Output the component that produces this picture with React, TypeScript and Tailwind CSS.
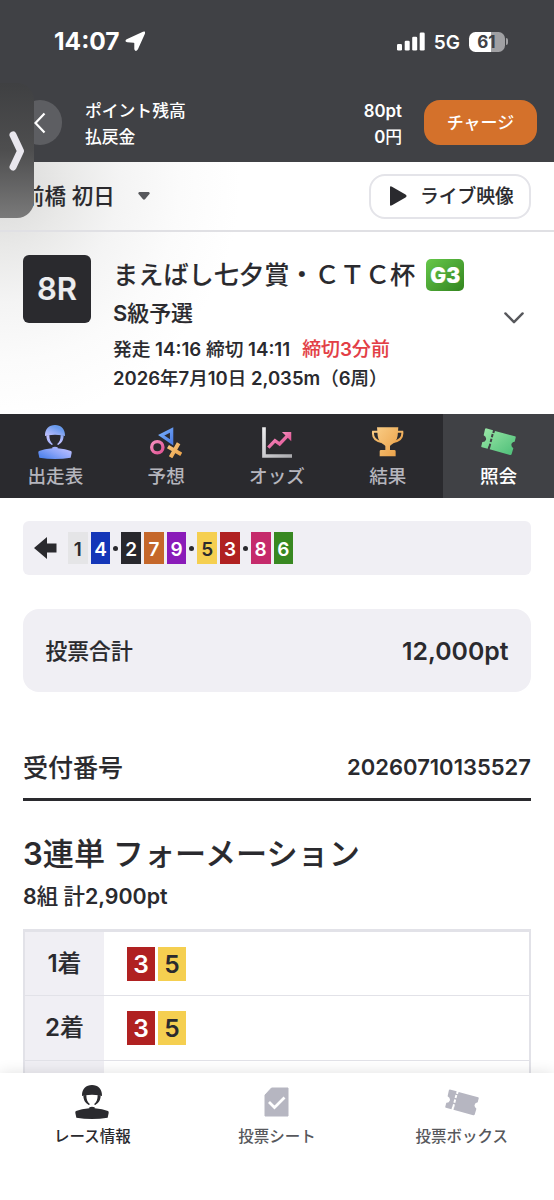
import React from "react";

/* Latin runs are set heavier than the Japanese runs around them. */
function Mix({ children }: { children: string }) {
  const runs = children.match(/[\x20-\x7e]+|[^\x20-\x7e]+/g) ?? [];
  return (
    <>
      {runs.map((r, i) =>
        /^[\x20-\x7e]/.test(r) ? (
          <span key={i} className="font-semibold [-webkit-text-stroke:0]">{r}</span>
        ) : (
          <span key={i}>{r}</span>
        )
      )}
    </>
  );
}

const plate: Record<number, string> = {
  1: "bg-[#e5e5e7] text-[#2a2a2e]",
  2: "bg-[#28282d] text-white",
  3: "bg-[#b02121] text-white",
  4: "bg-[#1436b8] text-white",
  5: "bg-[#f5cf50] text-[#2a2a2e]",
  6: "bg-[#388821] text-white",
  7: "bg-[#c5672a] text-white",
  8: "bg-[#c52a6b] text-white",
  9: "bg-[#8a1bb9] text-white",
};

function Rider({ fill }: { fill: string }) {
  return (
    <svg viewBox="115 42 102 106" className="h-[35.3px] w-[34px]">
      <g fill={fill}>
        <path d="M136 76 C136 57 148 45 166 45 C184 45 196 57 196 76 L196 78 L187 76 Q166 72 145 76 L136 78Z" />
        <path d="M140 76 L149 75 C149 88 152 96 160 103 L156 105 C146 99 140 91 140 76Z M192 76 L183 75 C183 88 180 96 172 103 L176 105 C186 99 192 91 192 76Z" />
        <path d="M158 112 Q166 109 174 112 L174 115 Q198 117 214 123 Q217 125 216 129 L213 143 Q190 147 166 147 Q142 147 119 143 L116 129 Q115 125 118 123 Q134 117 158 115Z" />
      </g>
    </svg>
  );
}

function Ticket({ fill, className }: { fill: string; className: string }) {
  return (
    <svg viewBox="614 56 105 83" className={className}>
      <path fill={fill} d="M629 57 L650 63 L648 70 L654 72 L656 65 L716 81 Q719 82 718 85 L715 97 Q706 98 705 106 Q705 112 711 117 L706 134 Q705 138 701 137 L640 120 L642 113 L636 111 L634 118 L617 114 Q614 113 615 110 L618 98 Q626 99 629 91 Q631 83 622 78 L626 60 Q627 57 629 57Z" />
      <path fill="none" stroke="currentColor" strokeWidth="6" strokeDasharray="10 5" d="M649 74 L639 114" />
    </svg>
  );
}

function Prediction() {
  return (
    <svg viewBox="449 47 98 98" className="h-[32.6px] w-[32.6px]" fill="none">
      <path d="M514 59 L483 75 L514 96Z" stroke="url(#blue)" strokeWidth="10" />
      <circle cx="471" cy="111" r="17" stroke="url(#pink)" strokeWidth="10" />
      <path d="M503 109 L543 132 M535 99 L511 141" stroke="url(#gold)" strokeWidth="12" />
    </svg>
  );
}

function Odds() {
  return (
    <svg viewBox="785 50 92 93" className="h-[31px] w-[30.6px]" fill="none">
      <path d="M791 51 V137 H876" stroke="url(#silver)" strokeWidth="11" />
      <path d="M804 112 L824 91 L838 101 L862 76" stroke="url(#pink)" strokeWidth="10" />
      <path d="M845 65 H873 V93Z" fill="url(#pink)" />
    </svg>
  );
}

function Trophy() {
  return (
    <svg viewBox="283 53 99 89" className="h-[29.6px] w-[33px]">
      <path d="M304 67 H289 Q286 92 314 98 M361 67 H377 Q380 92 351 98" fill="none" stroke="url(#gold)" strokeWidth="6" />
      <path fill="url(#gold)" d="M301 54 H365 L363 79 Q360 98 343 107 L340 110 V122 H353 Q357 122 357 126 V141 H309 V126 Q309 122 313 122 H326 V110 L323 107 Q305 98 303 79Z" />
    </svg>
  );
}

const dark = "bg-[#2a2a2e]";

const tabs = [
  { label: "出走表", icon: <Rider fill="url(#rider)" /> },
  { label: "予想", icon: <Prediction /> },
  { label: "オッズ", icon: <Odds /> },
  { label: "結果", icon: <Trophy /> },
  { label: "照会", icon: <Ticket fill="url(#green)" className="h-[27.7px] w-[35px] text-[#404145]" />, active: true },
];

const lineup = [[1, 4], [2, 7, 9], [5, 3], [8, 6]];

function Gradients() {
  return (
    <svg className="absolute h-0 w-0">
      <defs>
        <linearGradient id="rider" gradientUnits="userSpaceOnUse" x1="190" y1="45" x2="140" y2="147">
          <stop stopColor="#6fa2ee" /><stop offset=".12" stopColor="#6799ec" /><stop offset=".45" stopColor="#c3c2ff" /><stop offset=".75" stopColor="#8ba4f8" /><stop offset="1" stopColor="#5385ed" />
        </linearGradient>
        <linearGradient id="blue" x1="0" y1="0" x2="1" y2="1">
          <stop stopColor="#77adfa" /><stop offset="1" stopColor="#4e7fe5" />
        </linearGradient>
        <linearGradient id="pink" x1="0" y1="0" x2="1" y2="1">
          <stop stopColor="#f690bf" /><stop offset="1" stopColor="#e05292" />
        </linearGradient>
        <linearGradient id="gold" x1="0" y1="0" x2="1" y2="1">
          <stop stopColor="#f9cb83" /><stop offset="1" stopColor="#eaa047" />
        </linearGradient>
        <linearGradient id="silver" x1="0" y1="0" x2="1" y2="1">
          <stop stopColor="#ececee" /><stop offset="1" stopColor="#aaaaae" />
        </linearGradient>
        <linearGradient id="green" x1="0" y1="0" x2="1" y2="1">
          <stop stopColor="#9ce8a8" /><stop offset="1" stopColor="#4bbd77" />
        </linearGradient>
      </defs>
    </svg>
  );
}

function Header() {
  return (
    <header className="h-[162px] shrink-0 bg-[#404145] text-white [-webkit-text-stroke:0]">
      <div className="flex h-[83px] items-center pl-[54px] pr-[46px]">
        <span className="text-[24.5px] leading-none font-bold">14:07</span>
        <svg viewBox="376 94 62 62" className="ml-[5px] h-[20.6px] w-[20.6px]">
          <path fill="white" d="M430 96 Q439 93 436 102 L415 149 Q408 159 404 149 V131 Q404 129 402 129 L383 128 Q373 125 381 119Z" />
        </svg>
        <svg viewBox="0 0 28 19" className="ml-auto h-[19px] w-[28px]" fill="white">
          <rect x="0" y="12" width="5" height="6.5" rx="1.3" />
          <rect x="7.7" y="8.7" width="5" height="9.8" rx="1.3" />
          <rect x="15.2" y="4.8" width="5" height="13.7" rx="1.3" />
          <rect x="22.7" y=".5" width="5" height="18" rx="1.3" />
        </svg>
        <span className="ml-[9px] mt-[1px] text-[19px] leading-none font-semibold">5G</span>
        <div className="ml-[9px] flex h-[20px] w-[36px] items-center justify-center rounded-[6.5px] bg-[linear-gradient(90deg,#fff_61%,#a0a0a3_61%)] pr-px pt-[1px] text-[17px] leading-none font-bold text-[#404145]">61</div>
        <span className="ml-[1px] h-[7px] w-[2px] rounded-r-full bg-[#a0a0a3]" />
      </div>
      <div className="flex pl-[18px] pr-[17px] pt-[17px]">
        <div className="flex h-[45px] w-[44px] items-center justify-center rounded-full bg-[#5d5e62]">
          <svg viewBox="0 0 12 22" className="h-[22px] w-[12px]" fill="none" stroke="white" strokeWidth="2.2"><path d="M10.5 1.5 L1.5 11 L10.5 20.5" /></svg>
        </div>
        <div className="-mt-[2px] ml-[23px] text-[16.8px] leading-[26px]">
          <p>ポイント残高</p>
          <p>払戻金</p>
        </div>
        <div className="-mt-[2px] ml-auto text-right text-[16.8px] leading-[26px]">
          <p><Mix>80pt</Mix></p>
          <p><Mix>0円</Mix></p>
        </div>
        <button className="ml-[22px] h-[45px] w-[113px] rounded-[16px] bg-[#d4712b] pt-[2px] text-[17px] leading-none">チャージ</button>
      </div>
    </header>
  );
}

function Venue() {
  return (
    <div className="flex h-[70px] shrink-0 items-center border-b-[2.5px] border-[#e0e0e4] pl-[23px] pr-[23px]">
      <span className="pt-[2px] text-[21.5px] leading-none">前橋 初日</span>
      <svg viewBox="0 0 12 8" className="ml-[23px] h-[8px] w-[12px]"><path d="M1.4 0 H10.6 Q12.6 .8 11 2.6 L7.2 7 Q6 8.4 4.8 7 L1 2.6 Q-.6 .8 1.4 0Z" fill="#57585c" /></svg>
      <button className="ml-auto flex h-[45px] w-[162px] items-center rounded-[16px] border-[2.5px] border-[#e4e4e9] bg-white pl-[18px]">
        <svg viewBox="0 0 18 20" className="h-[20px] w-[18px]"><path d="M1 1.6 Q1 -.4 3 .8 L16.5 8.6 Q18.6 10 16.5 11.4 L3 19.2 Q1 20.4 1 18.4Z" fill="#2a2a2e" /></svg>
        <span className="ml-[13px] pt-[2px] whitespace-nowrap text-[18.8px] leading-none">ライブ映像</span>
      </button>
    </div>
  );
}

function Race() {
  return (
    <section className="flex h-[182px] shrink-0 pl-[23px] pr-[30px] pt-[23px]">
      <div className={`flex h-[68px] w-[68px] items-center justify-center rounded-[6px] pb-[2px] text-[31px] leading-none font-semibold text-[#ededef] ${dark}`}>8R</div>
      <div className="ml-[22px] whitespace-nowrap">
        <div className="flex h-[38px] items-center">
          <h1 className="pt-[1px] text-[25.2px] leading-[38px]">まえばし七夕賞・ＣＴＣ杯</h1>
          <span className="ml-[11px] mt-[2px] flex h-[32px] w-[38px] items-center justify-center rounded-[5px] bg-linear-to-br from-[#66c84a] to-[#33851f] text-[21px] leading-none font-black text-white">G3</span>
        </div>
        <p className="mt-[3px] text-[21.9px] leading-[34px]"><Mix>S級予選</Mix></p>
        <p className="mt-[6px] text-[18.7px] leading-[28px]">
          <Mix>発走 14:16 締切 14:11</Mix>
          <span className="ml-[12px] text-[18.9px] text-[#e33d45]"><Mix>締切3分前</Mix></span>
        </p>
        <p className="text-[18.5px] leading-[28px]"><Mix>2026年7月10日 2,035m（6周）</Mix></p>
      </div>
      <svg viewBox="0 0 20 12" className="ml-auto mt-[57px] h-[12px] w-[20px] shrink-0" fill="none" stroke="#57585c" strokeWidth="2.4" strokeLinecap="round" strokeLinejoin="round"><path d="M1.4 1.4 L10 10.2 L18.6 1.4" /></svg>
    </section>
  );
}

function Tabs() {
  return (
    <nav className={`grid h-[84px] shrink-0 grid-cols-5 [-webkit-text-stroke:0] ${dark}`}>
      {tabs.map((t) => (
        <div key={t.label} className={`flex flex-col items-center pt-[9px] text-[18.6px] ${t.active ? "bg-[#404145] text-white" : "text-[#b5b5bd]"}`}>
          <span className="flex h-[38px] items-center">{t.icon}</span>
          <span className="mt-[1px] leading-[28px]">{t.label}</span>
        </div>
      ))}
    </nav>
  );
}

function Lineup() {
  return (
    <div className="mt-[23px] flex h-[54px] items-center rounded-[6px] bg-[#f0eff4] pl-[11px]">
      <svg viewBox="0 0 23 22" className="h-[22px] w-[23px]"><path d="M0 11 L13 0 V6.4 H22.5 V15.6 H13 V22Z" fill="#2a2a2e" /></svg>
      <div className="ml-[11px] flex items-center">
        {lineup.map((group, i) => (
          <React.Fragment key={i}>
            {i > 0 && <span className={`mx-[3px] h-[5px] w-[5px] rounded-full ${dark}`} />}
            <div className="flex gap-[3px]">
              {group.map((n) => (
                <span key={n} className={`flex h-[32px] w-[19.7px] items-center justify-center pt-[2px] text-[19px] leading-none font-semibold [-webkit-text-stroke:0] ${plate[n]}`}>{n}</span>
              ))}
            </div>
          </React.Fragment>
        ))}
      </div>
    </div>
  );
}

function FormationRow({ place = "", picks = [] }: { place?: string; picks?: number[] }) {
  return (
    <div className="flex h-[64.3px] border-b-[1.3px] border-[#e2e2e8]">
      <div className="flex w-[79px] items-center justify-center bg-[#f0eff4] text-[24px] leading-none"><span><Mix>{place}</Mix></span></div>
      <div className="flex items-center gap-[3px] pl-[23px]">
        {picks.map((n) => (
          <span key={n} className={`flex h-[34px] w-[28px] items-center justify-center pt-[1px] text-[24.5px] leading-none font-semibold [-webkit-text-stroke:0] ${plate[n]}`}>{n}</span>
        ))}
      </div>
    </div>
  );
}

function BottomNav() {
  return (
    <nav className="relative grid h-[127px] shrink-0 grid-cols-3 bg-white text-[15.5px] text-[#57585c] shadow-[0_0_14px_rgba(0,0,0,0.12)] [-webkit-text-stroke:0]">
      <div className="flex flex-col items-center pt-[10px] text-[#2a2a2e]">
        <span className="flex h-[38px] items-center"><Rider fill="#2a2a2e" /></span>
        <span className="mt-[4px] leading-[24px]">レース情報</span>
      </div>
      <div className="flex flex-col items-center pt-[10px]">
        <span className="flex h-[38px] items-center">
          <svg viewBox="0 0 25 30" className="h-[30px] w-[25px]"><path d="M7.5 1 H24 V29 H1 V8Z" fill="#b6b6c1" stroke="#b6b6c1" strokeWidth="1" /><path d="M5 15 L10.5 20.5 L20.5 10.5" fill="none" stroke="white" strokeWidth="2.8" /></svg>
        </span>
        <span className="mt-[4px] leading-[24px]">投票シート</span>
      </div>
      <div className="flex flex-col items-center pt-[10px]">
        <span className="flex h-[38px] items-center"><Ticket fill="#b6b6c1" className="h-[27px] w-[34px] text-white" /></span>
        <span className="mt-[4px] leading-[24px]">投票ボックス</span>
      </div>
    </nav>
  );
}

export default function App() {
  return (
    <div className="relative flex h-[1200px] w-[554px] flex-col overflow-hidden bg-white font-['Inter','Noto_Sans_CJK_JP',sans-serif] font-medium text-[#2a2a2e] [-webkit-text-stroke:0.12px]">
      <Gradients />
      <Header />
      <div className="shrink-0 bg-[radial-gradient(ellipse_240px_240px_at_0px_20px,#d8d8d7_0%,#e9e9e8_28%,#f4f4f4_50%,#fbfbfb_75%,#ffffff_100%)]">
        <Venue />
        <Race />
      </div>
      <Tabs />
      <main className="min-h-0 flex-1 overflow-hidden px-[23px]">
        <Lineup />
        <div className="mt-[34px] flex h-[83px] items-center justify-between rounded-[16px] bg-[#f0eff4] px-[22.5px] pt-[2px]">
          <span className="text-[21.8px] leading-none">投票合計</span>
          <span className="text-[24.8px] leading-none font-semibold [-webkit-text-stroke:0]">12,000pt</span>
        </div>
        <div className="mt-[45px] flex h-[64px] items-center justify-between border-b-[3px] border-[#2a2a2e] pt-px">
          <span className="text-[25px] leading-none">受付番号</span>
          <span className="pb-[2px] text-[22px] leading-none font-semibold [-webkit-text-stroke:0]">20260710135527</span>
        </div>
        <h2 className="mt-[32px] whitespace-nowrap text-[31.1px] leading-[42px]"><Mix>3連単 フォーメーション</Mix></h2>
        <p className="mt-[6px] text-[21.4px] leading-[30px]"><Mix>8組 計2,900pt</Mix></p>
        <div className="mt-[18px] border-x-[2.5px] border-t-[3px] border-[#e2e2e8]">
          <FormationRow place="1着" picks={[3, 5]} />
          <FormationRow place="2着" picks={[3, 5]} />
          <FormationRow />
        </div>
      </main>
      <BottomNav />
      <div className="absolute left-0 top-[83px] flex h-[135px] w-[34px] items-center rounded-r-[17px] bg-linear-to-b from-[#3f4042] via-[#4e4e4f] to-[#7a7a7a] pl-[9px]">
        <svg viewBox="0 0 16 40" className="h-[40px] w-[16px]" fill="none" stroke="#e9e7ee" strokeWidth="7" strokeLinecap="round" strokeLinejoin="round"><path d="M4 4 L11.5 20 L4 36" /></svg>
      </div>
    </div>
  );
}
